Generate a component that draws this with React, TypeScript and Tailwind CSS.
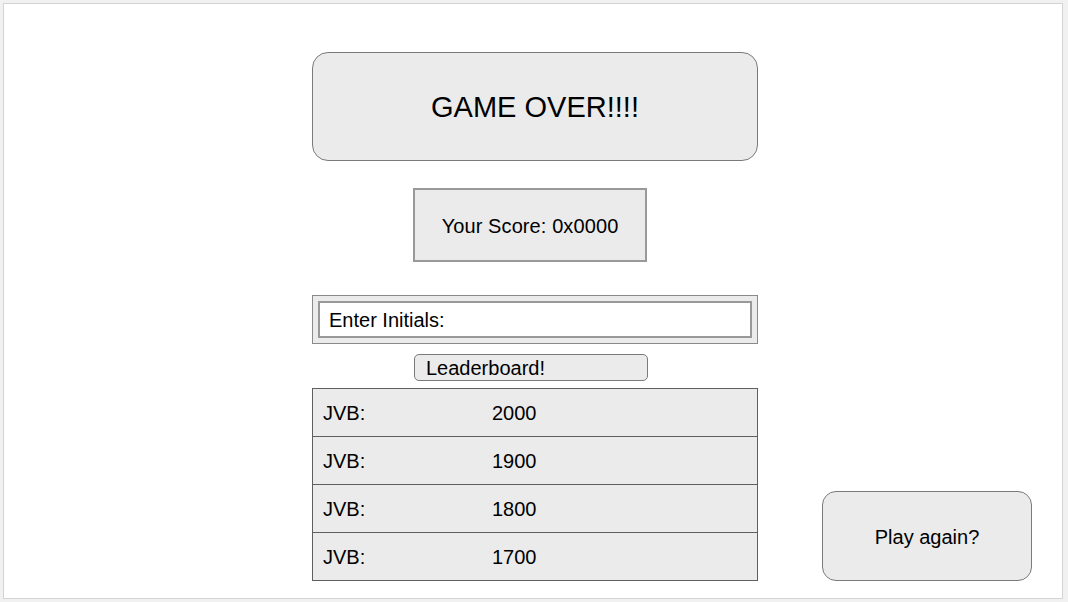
import React from "react";

const rows = [
  { name: "JVB:", score: "2000" },
  { name: "JVB:", score: "1900" },
  { name: "JVB:", score: "1800" },
  { name: "JVB:", score: "1700" },
];

export default function App() {
  return (
    <div
      className="w-[1068px] h-[602px] bg-[#f1f1f1] pt-[3px] pl-[3px] overflow-hidden text-black"
      style={{ fontFamily: '"Liberation Sans", Arial, sans-serif' }}
    >
      <div className="w-[1060px] h-[596px] bg-white border border-[#d4d4d4] flex items-start">
        <div className="flex items-end mt-[48px] ml-[308px]">
          <div className="flex flex-col w-[446px]">
            <div className="h-[109px] rounded-[16px] border border-[#7a7a7a] bg-[#ebebeb] flex items-center justify-center text-[29px] leading-none pt-[2px]">
              GAME OVER!!!!
            </div>
            <div className="mt-[27px] ml-[101px] w-[234px] h-[74px] border-2 border-[#999999] bg-[#ebebeb] flex items-center justify-center text-[20px] leading-none pt-[1px] tracking-[0.1px]">
              Your Score: 0x0000
            </div>
            <div className="mt-[33px] h-[49px] border border-[#8a8a8a] bg-[#ebebeb] p-[5px]">
              <div className="h-full bg-white border-2 border-[#999999] flex items-center pl-[9px] text-[20px] leading-none">
                Enter Initials:
              </div>
            </div>
            <div className="mt-[10px] ml-[102px] w-[234px] h-[27px] rounded-[5px] border border-[#7a7a7a] bg-[#ebebeb] flex items-center pl-[11px] text-[20px] leading-none">
              Leaderboard!
            </div>
            <div className="mt-[7px] flex flex-col">
              {rows.map((r, i) => (
                <div
                  key={i}
                  className={`h-[49px] border border-[#5f5f5f] bg-[#ebebeb] flex items-center text-[20px] leading-none pt-[1px] ${i > 0 ? "-mt-px" : ""}`}
                >
                  <span className="w-[179px] pl-[10px]">{r.name}</span>
                  <span>{r.score}</span>
                </div>
              ))}
            </div>
          </div>
          <div className="ml-[64px] w-[210px] h-[90px] rounded-[14px] border border-[#7a7a7a] bg-[#ebebeb] flex items-center justify-center text-[20px] leading-none pt-[1px]">
            Play again?
          </div>
        </div>
      </div>
    </div>
  );
}
